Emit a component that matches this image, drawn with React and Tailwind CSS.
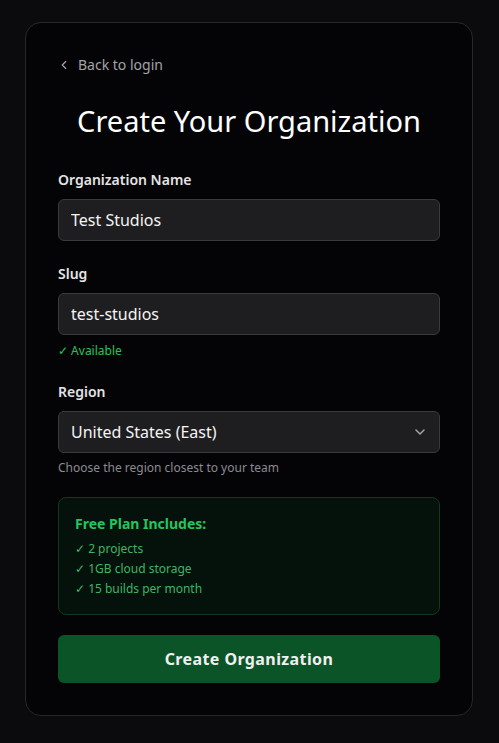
import { ChevronLeft, ChevronDown } from 'lucide-react'

const perks = ['2 projects', '1GB cloud storage', '15 builds per month']

export default function App() {
  return (
    <div className="min-h-[743px] bg-[#0b0b0d] pt-[22px] pb-7" style={{ fontFamily: '"Noto Sans", sans-serif' }}>
      <div className="ml-[25px] w-[448px] rounded-2xl border border-[#26272b] bg-[#040406] px-8 pt-8 pb-8">
        <a href="#" className="-ml-[1px] flex items-center gap-[7px] text-sm leading-5 text-[#a3a3a8]">
          <ChevronLeft size={14} strokeWidth={2} />
          Back to login
        </a>

        <h1 className="mt-7 text-center text-[29px] leading-9 font-normal text-white">Create Your Organization</h1>

        <form className="mt-[31px]" onSubmit={(e) => e.preventDefault()}>
          <label className="block text-sm leading-5 font-semibold text-[#e4e4e7]">Organization Name</label>
          <input
            defaultValue="Test Studios"
            className="mt-[9px] h-[42px] w-full rounded-md border border-[#3a3a3d] bg-[#1e1e20] px-3 text-base text-[#f4f4f5] outline-none"
          />

          <label className="mt-[23px] block text-sm leading-5 font-semibold text-[#e4e4e7]">Slug</label>
          <input
            defaultValue="test-studios"
            className="mt-[9px] h-[42px] w-full rounded-md border border-[#3a3a3d] bg-[#1e1e20] px-3 text-base text-[#f4f4f5] outline-none"
          />
          <p className="mt-2 text-xs leading-4 text-[#22c55e]">✓ Available</p>

          <label className="mt-[23px] block text-sm leading-5 font-semibold text-[#e4e4e7]">Region</label>
          <div className="relative mt-[9px]">
            <select
              defaultValue="us-east"
              className="h-[42px] w-full appearance-none rounded-md border border-[#3a3a3d] bg-[#1e1e20] px-3 text-base text-[#f4f4f5] outline-none"
            >
              <option value="us-east">United States (East)</option>
              <option value="us-west">United States (West)</option>
              <option value="eu">Europe</option>
            </select>
            <ChevronDown size={16} strokeWidth={2.2} className="pointer-events-none absolute top-1/2 right-3 -translate-y-1/2 text-[#a1a1aa]" />
          </div>
          <p className="mt-[7px] text-xs leading-4 text-[#8b8b92]">Choose the region closest to your team</p>

          <div className="mt-[21px] rounded-lg border border-[#0f3a1e] bg-[#04120b] px-4 pt-4 pb-[15px]">
            <div className="text-sm leading-5 font-bold text-[#22c55e]">Free Plan Includes:</div>
            <ul className="mt-[5px] text-xs leading-5 text-[#3fb465]">
              {perks.map((p) => (
                <li key={p}>✓ {p}</li>
              ))}
            </ul>
          </div>

          <button
            type="submit"
            className="mt-5 h-12 w-full rounded-md bg-[#0a5428] text-base font-bold tracking-wide text-[#f0f0f0]"
          >
            Create Organization
          </button>
        </form>
      </div>
    </div>
  )
}
